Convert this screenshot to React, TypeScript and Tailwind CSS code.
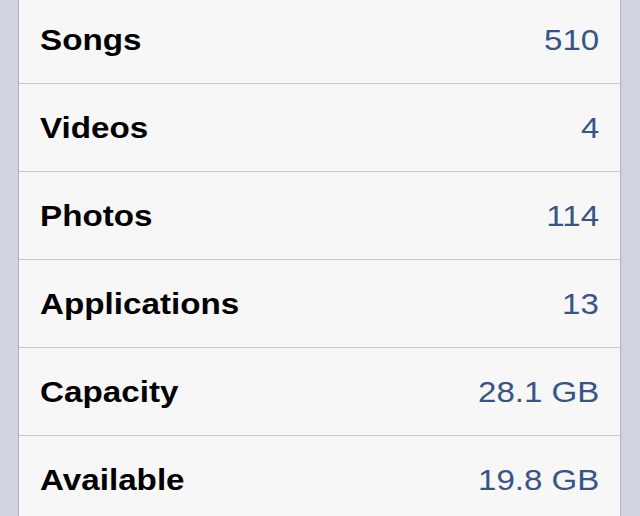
import React from "react";

const rows: [string, string][] = [
  ["Songs", "510"],
  ["Videos", "4"],
  ["Photos", "114"],
  ["Applications", "13"],
  ["Capacity", "28.1 GB"],
  ["Available", "19.8 GB"],
];

export default function App() {
  return (
    <div
      className="flex h-[516px] w-[640px] overflow-hidden bg-[#cdd2dc]"
      style={{ fontFamily: '"Liberation Sans", Arial, Helvetica, sans-serif' }}
    >
      <div className="w-[18px] shrink-0 bg-[#cfd4de]" />
      <div className="flex w-[603px] shrink-0 flex-col border-x border-[#acb1ba] bg-[#f7f7f7]">
        <div className="-mt-[4px] flex flex-col">
          {rows.map(([label, value]) => (
            <div
              key={label}
              className="flex h-[88px] shrink-0 items-center justify-between border-b border-[#c8c8c8] pl-[21px] pr-[21px] pt-[2px]"
            >
              <span className="inline-block origin-left scale-x-[1.145] text-[29px] font-bold text-black">
                {label}
              </span>
              <span className="inline-block origin-right scale-x-[1.12] text-[29.5px] text-[#385487]">
                {value}
              </span>
            </div>
          ))}
        </div>
      </div>
      <div className="flex-1 bg-[#cfd4de]" />
    </div>
  );
}
